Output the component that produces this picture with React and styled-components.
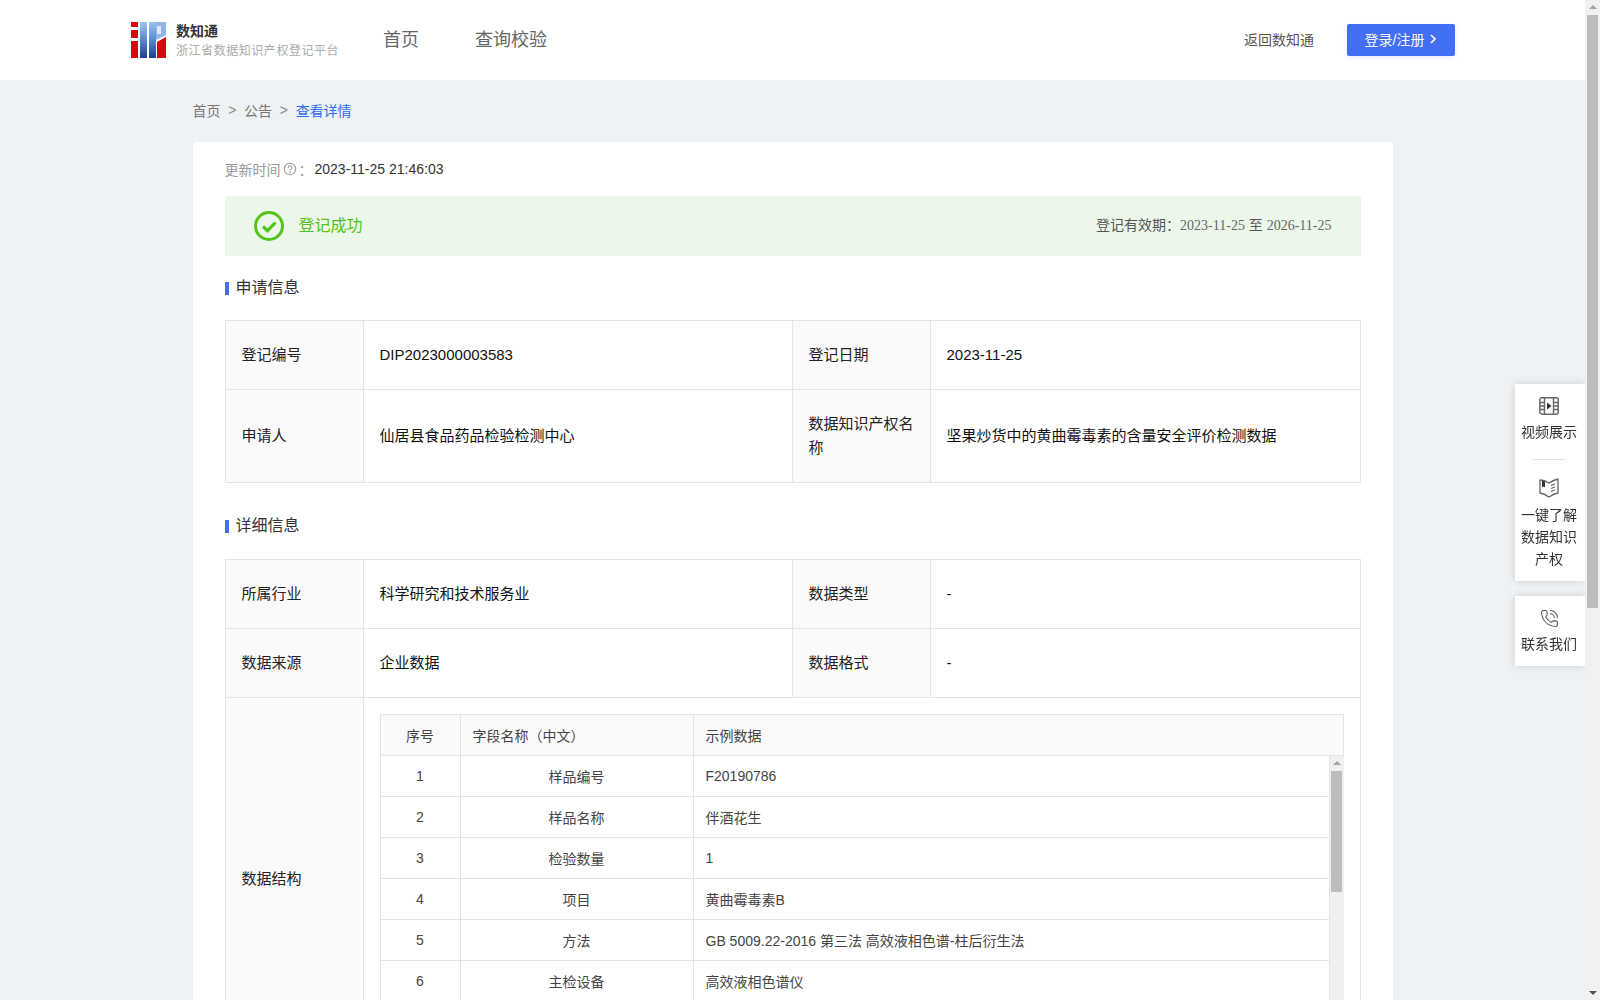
import styled, { createGlobalStyle } from "styled-components";
import { PhoneCall } from "lucide-react";

const GlobalStyle = createGlobalStyle`
  body {
    margin: 0;
    padding-right: 15px;
    background: #eef2f5;
    font-family: "Liberation Sans", "Noto Sans CJK SC", sans-serif;
    font-size: 14px;
    color: #333;
  }
  * {
    box-sizing: border-box;
  }
`;

const applyRows = [
  [
    { label: "登记编号", value: "DIP2023000003583" },
    { label: "登记日期", value: "2023-11-25" },
  ],
  [
    { label: "申请人", value: "仙居县食品药品检验检测中心" },
    { label: "数据知识产权名称", value: "坚果炒货中的黄曲霉毒素的含量安全评价检测数据" },
  ],
];

const detailRows = [
  [
    { label: "所属行业", value: "科学研究和技术服务业" },
    { label: "数据类型", value: "-" },
  ],
  [
    { label: "数据来源", value: "企业数据" },
    { label: "数据格式", value: "-" },
  ],
];

const fieldRows = [
  { no: 1, name: "样品编号", sample: "F20190786" },
  { no: 2, name: "样品名称", sample: "伴酒花生" },
  { no: 3, name: "检验数量", sample: "1" },
  { no: 4, name: "项目", sample: "黄曲霉毒素B" },
  { no: 5, name: "方法", sample: "GB 5009.22-2016 第三法 高效液相色谱-柱后衍生法" },
  { no: 6, name: "主检设备", sample: "高效液相色谱仪" },
];

const Logo = () => (
  <svg width="35" height="36" viewBox="0 0 35 36">
    <defs>
      <linearGradient id="logoBlue" x1="0" y1="0" x2="0" y2="1">
        <stop offset="0" stopColor="#9cc4ee" />
        <stop offset="0.45" stopColor="#5f8fd0" />
        <stop offset="1" stopColor="#1f3f8f" />
      </linearGradient>
    </defs>
    <rect x="0" width="7" height="36" fill="#d9060f" />
    <rect x="0" y="5" width="7" height="3" fill="#fff" />
    <rect x="0" y="16" width="7" height="3" fill="#fff" />
    <rect x="9" width="7" height="36" fill="url(#logoBlue)" />
    <rect x="18" width="7" height="36" fill="url(#logoBlue)" />
    <path d="M25 0h10v13l-10 5z" fill="#8fb6e6" />
    <rect x="26" y="4" width="4" height="8" fill="#dbe8f8" />
    <path d="M26 36V20l9-5v21z" fill="#d9060f" />
  </svg>
);

const HelpIcon = () => (
  <svg width="14" height="14" viewBox="0 0 14 14" fill="none" stroke="#999" strokeWidth="1.1">
    <circle cx="7" cy="7" r="5.7" />
    <path d="M5.2 5.6a1.8 1.8 0 1 1 2.7 1.5c-.6.4-.9.7-.9 1.3" />
    <circle cx="7" cy="10.1" r=".4" fill="#999" />
  </svg>
);

const SuccessIcon = () => (
  <svg width="30" height="30" viewBox="0 0 30 30" fill="none" stroke="#52c41a">
    <circle cx="15" cy="15" r="13.5" strokeWidth="3" />
    <path d="M9 15.5l4.500 4.200L21.500 11.500" strokeWidth="3.200" />
  </svg>
);

const FilmIcon = () => (
  <svg width="20" height="18" viewBox="0 0 20 18" fill="none" stroke="#666" strokeWidth="1.4">
    <rect x=".8" y=".8" width="18.4" height="16.4" rx="2" />
    <path d="M5.5 1v16M14.5 1v16M1 5.500h4.500M1 9h4.500M1 12.500h4.500M14.500 5.500H19M14.500 9H19M14.500 12.500H19" />
    <path d="M8 5.500l4.500 3.500L8 12.500z" fill="#333" stroke="none" />
  </svg>
);

const BookIcon = () => (
  <svg width="20" height="20" viewBox="0 0 20 20" fill="none" stroke="#666" strokeWidth="1.3">
    <path d="M1 2c3 0 6 1 9 3 2-1.500 5-3 9-4v14c-3 .5-6 2-9 4-3-2-6-3.500-9-4z" strokeLinejoin="round" />
    <path d="M3 2.500l3 1v6l-1.500-1L3 9.500z" fill="#333" stroke="none" />
    <path d="M12 7.500l4-1.500M12 10.500l4-1.500M12 13.500l4-1.500" strokeWidth="1.100" />
  </svg>
);

const App = () => {
  return (
    <>
      <GlobalStyle />
      <Header>
        <Brand>
          <Logo />
          <BrandText>
            <BrandName>数知通</BrandName>
            <BrandSub>浙江省数据知识产权登记平台</BrandSub>
          </BrandText>
        </Brand>
        <Nav>
          <NavLink>首页</NavLink>
          <NavLink>查询校验</NavLink>
        </Nav>
        <HeaderRight>
          <BackLink>返回数知通</BackLink>
          <LoginButton>
            登录/注册
            <svg width="8" height="10" viewBox="0 0 8 10" fill="none" stroke="#fff" strokeWidth="1.6">
              <path d="M2 1l4 4-4 4" />
            </svg>
          </LoginButton>
        </HeaderRight>
      </Header>

      <Main>
        <Breadcrumb>
          <span>首页</span>
          <Sep>&gt;</Sep>
          <span>公告</span>
          <Sep>&gt;</Sep>
          <Current>查看详情</Current>
        </Breadcrumb>

        <Card>
          <UpdateRow>
            <UpdateLabel>
              更新时间
              <HelpIcon />：
            </UpdateLabel>
            <UpdateValue>2023-11-25 21:46:03</UpdateValue>
          </UpdateRow>

          <Banner>
            <BannerStatus>
              <SuccessIcon />
              <BannerText>登记成功</BannerText>
            </BannerStatus>
            <BannerValid>
              登记有效期：<ValidDate>2023-11-25</ValidDate> 至 <ValidDate>2026-11-25</ValidDate>
            </BannerValid>
          </Banner>

          <SectionTitle>申请信息</SectionTitle>
          <InfoTable>
            <InfoCols />
            <tbody>
              {applyRows.map((row, i) => (
                <InfoRow key={i} $height={i === 0 ? 69 : 93}>
                  {row.map((cell) => (
                    <InfoPair key={cell.label} {...cell} />
                  ))}
                </InfoRow>
              ))}
            </tbody>
          </InfoTable>

          <SectionTitle $top={30} $bottom={22}>详细信息</SectionTitle>
          <InfoTable>
            <InfoCols />
            <tbody>
              {detailRows.map((row, i) => (
                <InfoRow key={i} $height={69}>
                  {row.map((cell) => (
                    <InfoPair key={cell.label} {...cell} />
                  ))}
                </InfoRow>
              ))}
              <tr>
                <LabelCell>数据结构</LabelCell>
                <StructureCell colSpan={3}>
                  <FieldHead>
                    <FieldCell $width={80} $center>序号</FieldCell>
                    <FieldCell $width={233}>字段名称（中文）</FieldCell>
                    <FieldCell $grow>示例数据</FieldCell>
                  </FieldHead>
                  <FieldBody>
                    <FieldList>
                      {fieldRows.map((row) => (
                        <FieldRow key={row.no}>
                          <FieldCell $width={80} $center>{row.no}</FieldCell>
                          <FieldCell $width={233} $center>{row.name}</FieldCell>
                          <FieldCell $grow>{row.sample}</FieldCell>
                        </FieldRow>
                      ))}
                    </FieldList>
                    <InnerRail>
                      <RailArrow />
                      <RailThumb $height={121} />
                      <RailArrow $down />
                    </InnerRail>
                  </FieldBody>
                </StructureCell>
              </tr>
            </tbody>
          </InfoTable>
        </Card>
      </Main>

      <SideDock>
        <SidePanel>
          <SideItem>
            <FilmIcon />
            <span>视频展示</span>
          </SideItem>
          <SideDivider />
          <SideItem>
            <BookIcon />
            <span>一键了解数据知识产权</span>
          </SideItem>
        </SidePanel>
        <SidePanel>
          <SideItem $gap={5}>
            <PhoneCall size={19} strokeWidth={1.3} color="#555" />
            <span>联系我们</span>
          </SideItem>
        </SidePanel>
      </SideDock>

      <PageRail>
        <RailArrow />
        <RailThumb $height={593} />
        <RailArrow $down />
      </PageRail>
    </>
  );
};

const InfoCols = () => (
  <colgroup>
    <col width="138" />
    <col width="429" />
    <col width="138" />
    <col width="430" />
  </colgroup>
);

const InfoPair = ({ label, value }) => (
  <>
    <LabelCell>{label}</LabelCell>
    <ValueCell>{value}</ValueCell>
  </>
);

const Header = styled.header`
  height: 80px;
  display: flex;
  align-items: center;
  padding: 0 130px 0 131px;
  background: #fff;
`;

const Brand = styled.div`
  display: flex;
  align-items: center;
  gap: 10px;
  width: 252px;
`;

const BrandText = styled.div`
  display: flex;
  flex-direction: column;
  gap: 2px;
  padding-top: 2px;
`;

const BrandName = styled.div`
  font-size: 14px;
  line-height: 18px;
  font-weight: 700;
  color: #333;
`;

const BrandSub = styled.div`
  font-size: 12px;
  line-height: 18px;
  letter-spacing: 0.55px;
  color: #aaa;
  white-space: nowrap;
`;

const Nav = styled.nav`
  display: flex;
  gap: 56px;
  padding-bottom: 5px;
`;

const NavLink = styled.a`
  font-size: 18px;
  color: #666;
  cursor: pointer;
`;

const HeaderRight = styled.div`
  margin-left: auto;
  display: flex;
  align-items: center;
  gap: 33px;
`;

const BackLink = styled.a`
  padding-bottom: 2px;
  font-size: 14px;
  color: #555;
  cursor: pointer;
`;

const LoginButton = styled.button`
  width: 108px;
  height: 32px;
  display: flex;
  align-items: center;
  justify-content: center;
  gap: 5px;
  padding: 0 0 2px;
  border: none;
  border-radius: 2px;
  background: #426ef3;
  box-shadow: 0 2px 4px rgba(66, 110, 243, 0.1);
  color: #fff;
  font: inherit;
  font-size: 14px;
`;

const Main = styled.main`
  width: 1200px;
  margin: 0 auto;
  padding-bottom: 30px;
`;

const Breadcrumb = styled.div`
  height: 62px;
  display: flex;
  align-items: center;
  padding-bottom: 2px;
  color: #777;
`;

const Sep = styled.span`
  margin: 0 7.7px;
  color: #888;
`;

const Current = styled.span`
  color: #2f6bf5;
`;

const Card = styled.section`
  min-height: 1463px;
  padding: 16px 32px 32px;
  background: #fff;
  border-radius: 4px;
`;

const UpdateRow = styled.div`
  height: 22px;
  display: flex;
  align-items: center;
`;

const UpdateLabel = styled.span`
  display: flex;
  align-items: center;
  gap: 2px;
  width: 90px;
  padding-bottom: 1px;
  color: #999;
  white-space: nowrap;
`;

const UpdateValue = styled.span`
  color: #333;
`;

const Banner = styled.div`
  height: 60px;
  margin-top: 16px;
  padding: 0 29px 0 29px;
  display: flex;
  align-items: center;
  justify-content: space-between;
  background: #ebf7e8;
`;

const BannerStatus = styled.div`
  display: flex;
  align-items: center;
  gap: 15px;
`;

const BannerText = styled.span`
  padding-bottom: 5px;
  font-size: 16px;
  color: #52c41a;
`;

const BannerValid = styled.div`
  padding-bottom: 5px;
  color: #555;
`;

const ValidDate = styled.span`
  font-family: "Liberation Serif", "Noto Sans CJK SC", serif;
  color: #666;
`;

const SectionTitle = styled.h3`
  display: flex;
  align-items: center;
  height: 24px;
  margin: ${(p) => p.$top ?? 19}px 0 ${(p) => p.$bottom ?? 21}px;
  padding-bottom: 2px;
  font-size: 16px;
  font-weight: 400;
  color: #333;

  &::before {
    content: "";
    width: 4px;
    height: 13px;
    margin: 5px 7px 0 0;
    background: #426ef3;
  }
`;

const InfoTable = styled.table`
  width: 1135px;
  table-layout: fixed;
  border-collapse: collapse;
`;

const InfoRow = styled.tr`
  height: ${(p) => p.$height}px;
`;

const LabelCell = styled.td`
  padding: 0 16px;
  border: 1px solid #e4e4e4;
  background: #fafafa;
  font-size: 15px;
  line-height: 24px;
  color: #222;
`;

const ValueCell = styled.td`
  padding: 0 16px;
  border: 1px solid #e4e4e4;
  font-size: 15px;
  line-height: 24px;
  color: #111;
`;

const StructureCell = styled.td`
  padding: 16px;
  border: 1px solid #e4e4e4;
`;

const FieldHead = styled.div`
  display: flex;
  height: 42px;
  border: 1px solid #e4e4e4;
  background: #fafafa;
`;

const FieldCell = styled.div`
  ${(p) => (p.$grow ? "flex: 1;" : `width: ${p.$width}px;`)}
  display: flex;
  align-items: center;
  justify-content: ${(p) => (p.$center ? "center" : "flex-start")};
  padding: 0 12px 1px;
  color: #444;
  border-right: 1px solid #e4e4e4;

  &:last-child {
    border-right: none;
  }
`;

const FieldBody = styled.div`
  display: flex;
  height: 288px;
  border-left: 1px solid #e4e4e4;
`;

const FieldList = styled.div`
  flex: 1;
`;

const FieldRow = styled.div`
  display: flex;
  height: 41px;
  border-bottom: 1px solid #e4e4e4;
`;

const PageRail = styled.div`
  position: fixed;
  top: 0;
  right: 0;
  bottom: 0;
  width: 15px;
  display: flex;
  flex-direction: column;
  align-items: center;
  background: #f1f1f1;
`;

const InnerRail = styled.div`
  width: 15px;
  display: flex;
  flex-direction: column;
  align-items: center;
  border-left: 1px solid #e4e4e4;
  background: #f0f0f0;
`;

const RailArrow = styled.div`
  width: 0;
  height: 0;
  margin: ${(p) => (p.$down ? "auto 0 5px" : "5px 0 6px")};
  border-left: 4px solid transparent;
  border-right: 4px solid transparent;
  ${(p) => (p.$down ? "border-top: 4px solid #505050;" : "border-bottom: 4px solid #a3a3a3;")}
`;

const RailThumb = styled.div`
  width: 11px;
  height: ${(p) => p.$height}px;
  background: #bdbdbd;
`;

const SideDock = styled.aside`
  position: fixed;
  top: 384px;
  right: 15px;
  width: 70px;
  display: flex;
  flex-direction: column;
  gap: 15px;
`;

const SidePanel = styled.div`
  padding: 13px 7px 11px 5px;
  background: #fff;
  box-shadow: 0 0 8px rgba(0, 0, 0, 0.15);
`;

const SideItem = styled.div`
  display: flex;
  flex-direction: column;
  align-items: center;
  gap: ${(p) => p.$gap ?? 6}px;
  font-size: 14px;
  line-height: 22px;
  text-align: center;
  color: #333;
`;

const SideDivider = styled.div`
  width: 32px;
  height: 1px;
  margin: 16px auto 18px;
  background: #e4e4e4;
`;

export default App;
